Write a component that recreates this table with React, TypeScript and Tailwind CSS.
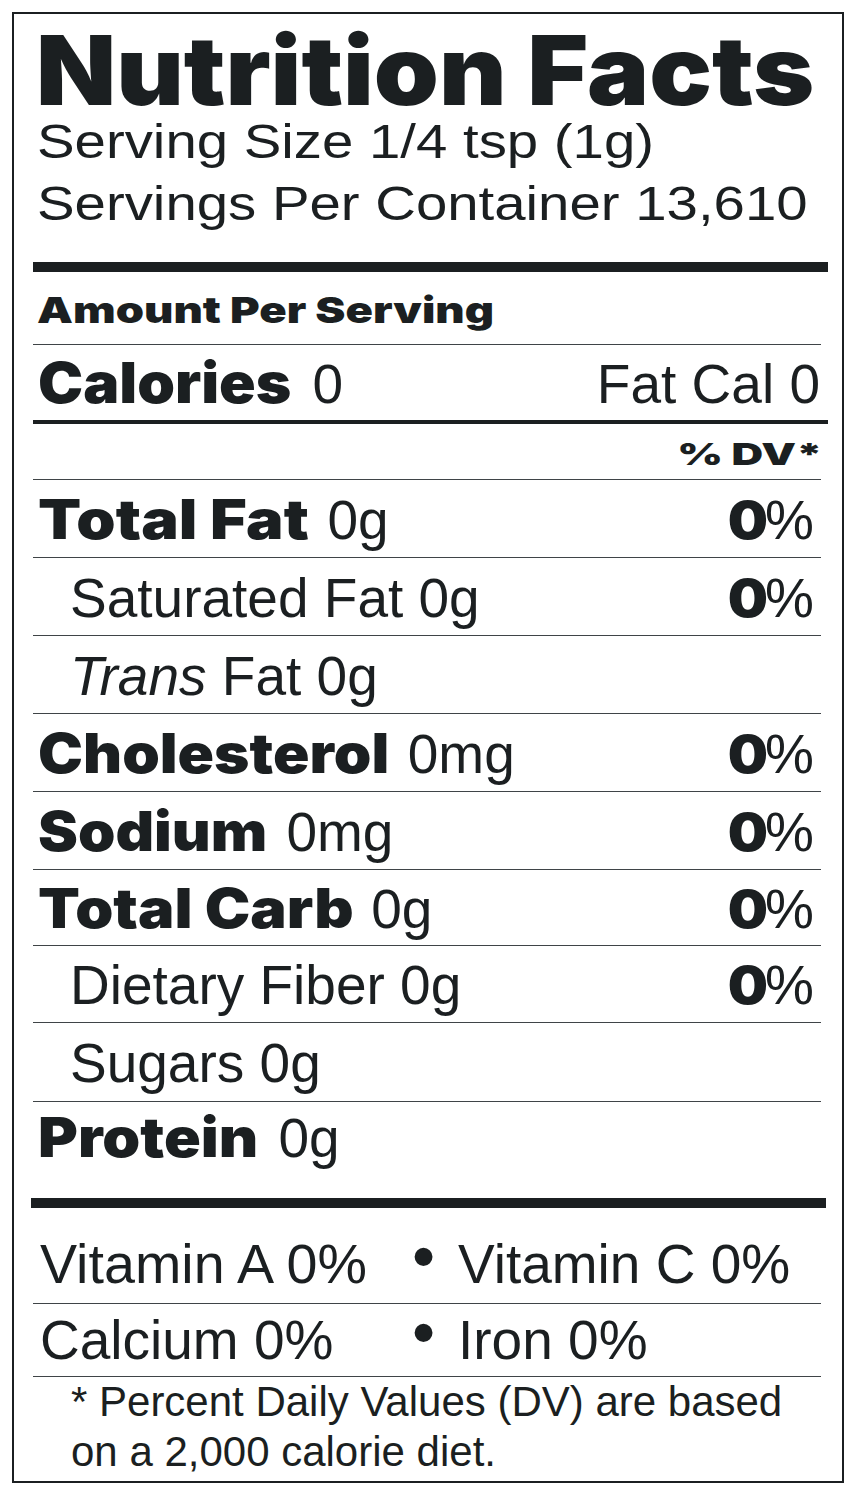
import React from "react";

const INTER = "font-['Inter',sans-serif] font-black";

function Pct() {
  return (
    <span className="whitespace-nowrap">
      <span className={`${INTER} inline-block origin-right scale-x-[1.09] text-[52px] leading-none -mr-[3px]`}>0</span>
      <span>%</span>
    </span>
  );
}

function Row({
  lead,
  sub,
  right,
  last,
  children,
}: {
  lead: string;
  sub?: boolean;
  right?: React.ReactNode;
  last?: boolean;
  children: React.ReactNode;
}) {
  return (
    <div
      className={`flex justify-between whitespace-nowrap pt-[3px] ${lead} ${
        last ? "" : "border-b border-[#3f4447]"
      }`}
    >
      <div className={sub ? "pl-[37px]" : "pl-[5px]"}>{children}</div>
      {right ? <div className="pr-[7px]">{right}</div> : null}
    </div>
  );
}

export default function App() {
  return (
    <div className="bg-white w-[859px] h-[1500px] pt-[12px] pl-[12px] text-[#1b1f21] font-['Liberation_Sans',Arial,sans-serif]">
      <div className="w-[832px] h-[1471px] border-2 border-[#1b1f21] pl-[19px] pr-[21px] overflow-hidden">
        {/* Title */}
        <div className={`${INTER} text-[96px] leading-[80px] pt-[16px] pl-[3px] whitespace-nowrap`}>
          <span className="inline-block origin-left scale-x-[1.085]">Nutrition Facts</span>
        </div>

        {/* Serving info */}
        <div className="text-[49px] leading-[62px] pl-[4px] whitespace-nowrap">
          <div className="w-fit origin-left scale-x-[1.15]">
            Serving Size 1/4 tsp (1g)
            <br />
            Servings Per Container 13,610
          </div>
        </div>

        {/* Thick bar */}
        <div className="mt-[28px] h-[10px] bg-[#1b1f21] -mr-[7px]" />

        {/* Amount per serving */}
        <div className={`${INTER} text-[36px] leading-[67px] pt-[5px] pl-[4px] whitespace-nowrap border-b border-[#3f4447]`}>
          <span className="inline-block origin-left scale-x-[1.258]">Amount Per Serving</span>
        </div>

        {/* Calories */}
        <div className="flex justify-between text-[55px] leading-[72px] pt-[3px] whitespace-nowrap">
          <div className="pl-[5px]">
            <span className={`${INTER} inline-block origin-left scale-x-[1.08] mr-[40px] text-[56px] leading-none`}>Calories</span>
            <span>0</span>
          </div>
          <div className="pr-[1px]">Fat Cal 0</div>
        </div>
        <div className="h-[4px] bg-[#1b1f21] -mr-[7px]" />

        {/* % DV */}
        <div className="flex justify-end pt-[5px] leading-[50px] border-b border-[#3f4447] whitespace-nowrap">
          <span className={`${INTER} text-[30px] inline-block origin-right scale-x-[1.46] -mr-[2px]`}>% DV*</span>
        </div>

        {/* Nutrients */}
        <div className="text-[55px]">
          <Row lead="leading-[74px]" right={<Pct />}>
            <span className={`${INTER} inline-block origin-left scale-x-[1.145] mr-[53px] leading-none`}>Total Fat</span>
            <span>0g</span>
          </Row>
          <Row lead="leading-[74px]" sub right={<Pct />}>
            Saturated Fat 0g
          </Row>
          <Row lead="leading-[74px]" sub>
            <i>Trans</i> Fat 0g
          </Row>
          <Row lead="leading-[74px]" right={<Pct />}>
            <span className={`${INTER} inline-block origin-left scale-x-[1.095] mr-[49px] leading-none`}>Cholesterol</span>
            <span>0mg</span>
          </Row>
          <Row lead="leading-[74px]" right={<Pct />}>
            <span className={`${INTER} inline-block origin-left scale-x-[1.09] mr-[38px] leading-none`}>Sodium</span>
            <span>0mg</span>
          </Row>
          <Row lead="leading-[72px]" right={<Pct />}>
            <span className={`${INTER} inline-block origin-left scale-x-[1.11] mr-[49px] leading-none`}>Total Carb</span>
            <span>0g</span>
          </Row>
          <Row lead="leading-[73px]" sub right={<Pct />}>
            Dietary Fiber 0g
          </Row>
          <Row lead="leading-[75px]" sub>
            Sugars 0g
          </Row>
          <Row lead="leading-[66px]" last>
            <span className={`${INTER} inline-block origin-left scale-x-[1.105] mr-[41px] leading-none`}>Protein</span>
            <span>0g</span>
          </Row>
        </div>

        {/* Thick bar */}
        <div className="mt-[27px] h-[10px] bg-[#1b1f21] -ml-[2px] -mr-[5px]" />

        {/* Vitamins */}
        <div className="text-[55px] whitespace-nowrap">
          <div className="grid grid-cols-[372px_46px_1fr] pl-[7px] pt-[17px] leading-[78px] border-b border-[#3f4447]">
            <span className="inline-block origin-left scale-x-[1.012]">Vitamin A 0%</span>
            <span className="text-[66px] leading-none self-start -mt-[2px]">•</span>
            <span>Vitamin C 0%</span>
          </div>
          <div className="grid grid-cols-[372px_46px_1fr] pl-[7px] leading-[72px] border-b border-[#3f4447]">
            <span>Calcium 0%</span>
            <span className="text-[66px] leading-none self-start -mt-[5px]">•</span>
            <span>Iron 0%</span>
          </div>
        </div>

        {/* Footnote */}
        <div className="text-[42px] leading-[50px] pl-[38px] whitespace-nowrap">
          * Percent Daily Values (DV) are based
          <br />
          on a 2,000 calorie diet.
        </div>
      </div>
    </div>
  );
}
